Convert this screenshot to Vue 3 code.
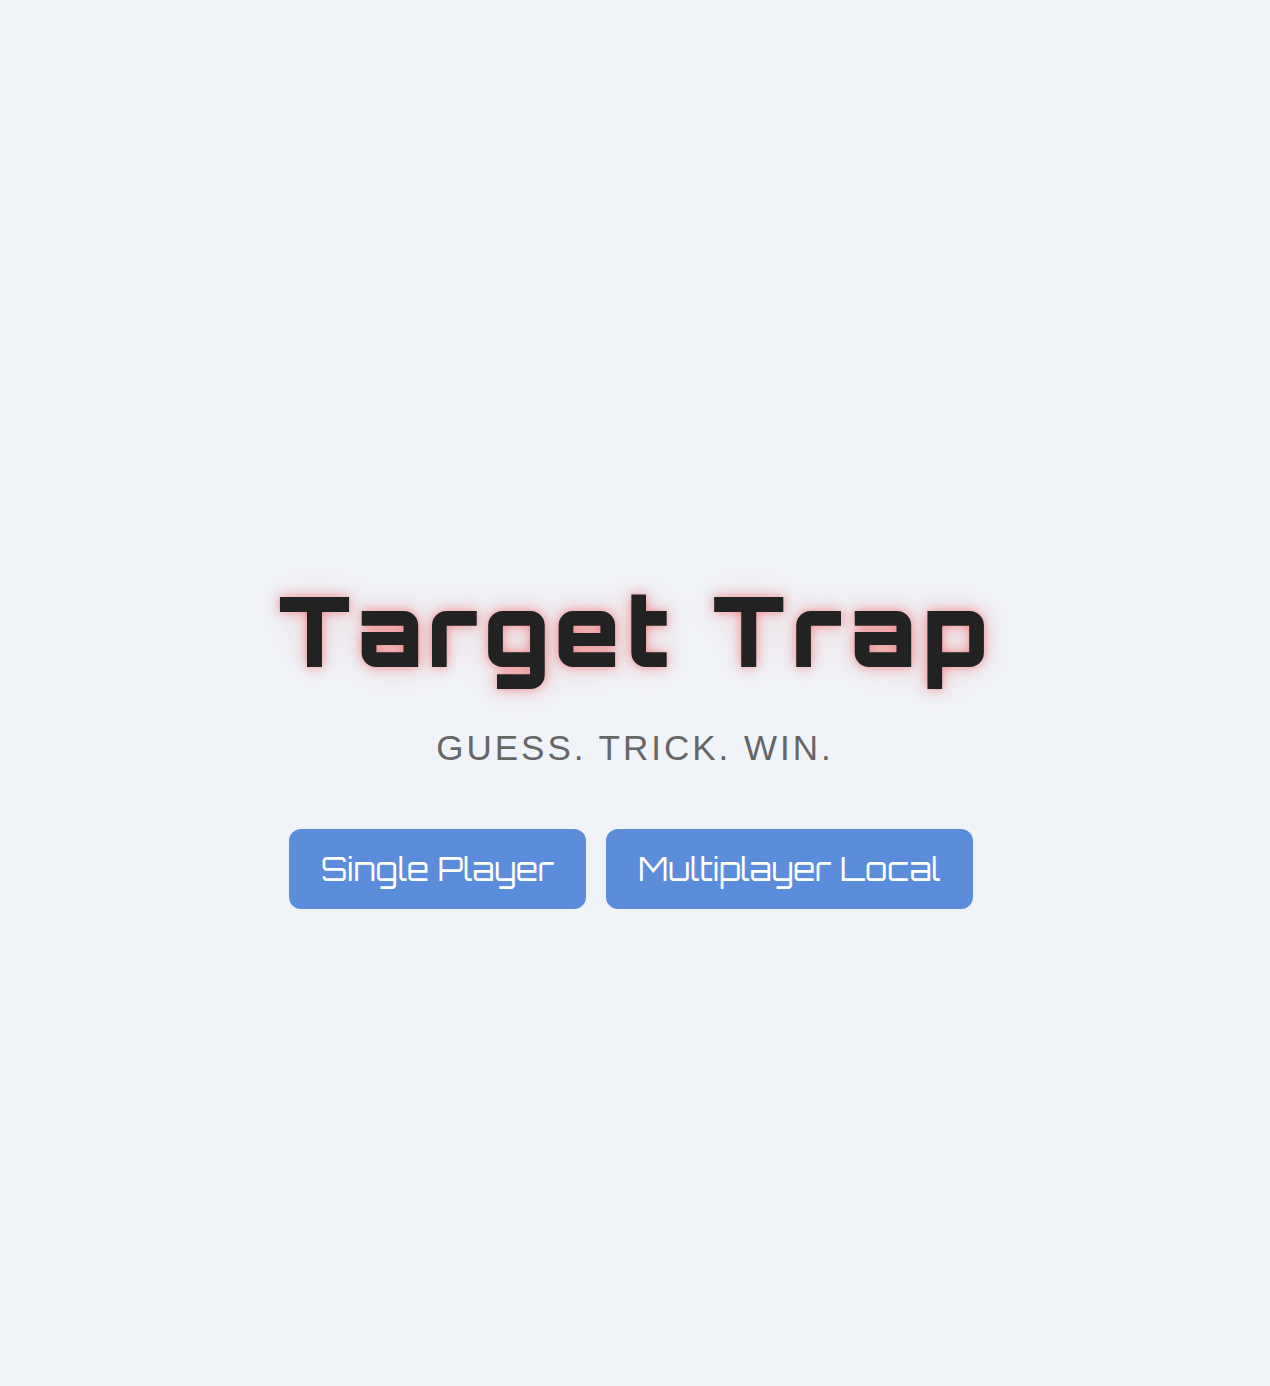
<template>
    <main class="home">
        <h1 class="title">Target Trap</h1>
        <p class="tagline">Guess. Trick. Win.</p>
        <div class="modes">
            <button v-for="mode in modes" :key="mode.value" type="button" class="mode-btn"
                @click="selectMode(mode.value)">
                {{ mode.label }}
            </button>
        </div>
    </main>
</template>

<script setup>
import { ref } from 'vue'

const emits = defineEmits(['start']);

const selected = ref('');

const modes = [
    { label: 'Single Player', value: 'single' },
    { label: 'Multiplayer Local', value: 'local' }
]

const selectMode = (value) => {
    selected.value = value;
    emits('start', value);
}
</script>

<style>
body {
    margin: 0;
    background: #f0f4f9;
}
</style>

<style scoped>
.home {
    display: flex;
    flex-direction: column;
    align-items: center;
    justify-content: center;
    min-height: 100vh;
    box-sizing: border-box;
    padding: 93px 16px 0;
    text-align: center;
}

.title {
    margin: 0;
    font-family: 'Orbitron', 'DejaVu Sans', sans-serif;
    font-size: 96px;
    font-weight: 900;
    line-height: 120px;
    letter-spacing: 6px;
    color: #222;
    text-shadow: 0 0 12px rgba(239, 68, 68, 0.6), 0 0 40px rgba(239, 68, 68, 0.2);
}

.tagline {
    margin: 36px 0 59px;
    font-family: 'Liberation Sans', Arial, sans-serif;
    font-size: 35px;
    line-height: 44px;
    letter-spacing: 3px;
    text-transform: uppercase;
    color: #666;
}

.modes {
    display: flex;
    flex-wrap: wrap;
    justify-content: center;
    gap: 12px;
}

.mode-btn {
    margin-right: 8px;
    padding: 20px 32px;
    border: none;
    border-radius: 12px;
    background: #5c8ddb;
    color: #fff;
    font-family: 'Orbitron', 'DejaVu Sans', sans-serif;
    font-size: 32px;
    line-height: 40px;
    cursor: pointer;
}

.mode-btn:hover {
    background: #4a7bc8;
}
</style>
